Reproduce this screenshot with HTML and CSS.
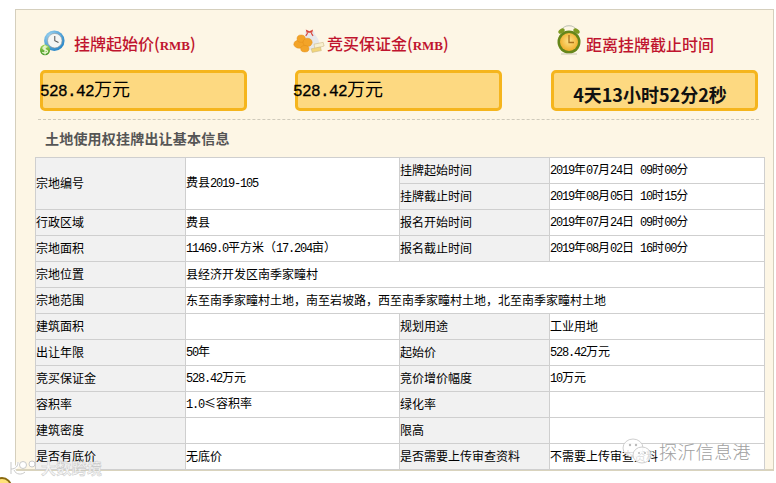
FILE: index.html
```html
<!DOCTYPE html>
<html lang="zh-CN">
<head>
<meta charset="utf-8">
<title>土地使用权挂牌出让基本信息</title>
<link rel="stylesheet" href="styles.css">
</head>
<body>
<div class="panel">
  <div class="stats">
    <section class="stat stat-a">
      <h3 class="stat-title">
        <svg class="ico" viewBox="0 0 28 28" width="26" height="26">
          <defs>
            <radialGradient id="blue" cx=".35" cy=".3" r=".8"><stop offset="0" stop-color="#a8dcf6"/><stop offset="1" stop-color="#1d7fc4"/></radialGradient>
            <linearGradient id="grn" x1="0" y1="0" x2="0" y2="1"><stop offset="0" stop-color="#a4d65a"/><stop offset="1" stop-color="#3d9424"/></linearGradient>
          </defs>
          <circle cx="16.500" cy="11.500" r="11" fill="url(#blue)"/>
          <circle cx="17" cy="11.500" r="7.800" fill="#f4f6f4" stroke="#8a8f92" stroke-width=".6"/>
          <path d="M17 6.500V11.500L21 13.500" fill="none" stroke="#555" stroke-width="1.100"/>
          <ellipse cx="6.500" cy="21.500" rx="5.500" ry="5.800" fill="url(#grn)"/>
          <path d="M9 18.500C7 17.300 4 18 4.300 19.800C4.600 21.500 9 21 9.200 23C9.300 25 5.600 25.300 3.600 24M6.500 16.500V26.500" fill="none" stroke="#eaf6cf" stroke-width="1.500"/>
        </svg>
        <span>挂牌起始价(<span class="n-t">RMB</span>)</span>
      </h3>
      <div class="value"><span class="n-v">528.42</span>万元</div>
    </section>
    <section class="stat stat-b">
      <h3 class="stat-title">
        <svg class="ico" viewBox="0 0 36 28" width="33" height="27">
          <path d="M14 4C16 7 13 10 13 16C13 22 17 25 23 25C29 25 31 20 29 14C28 10 24 8 24 4Z" fill="#e6e8ea"/>
          <path d="M15 2L19 4L23 2L22 5.500H16Z" fill="#d8453a"/>
          <path d="M17 6L15 9M21 6L23 9" stroke="#d8453a" stroke-width="1.200"/>
          <g fill="#f3a428" stroke="#e08a15" stroke-width=".5">
            <ellipse cx="8" cy="18" rx="6" ry="4.500"/>
            <ellipse cx="10" cy="12" rx="4.500" ry="4"/>
            <ellipse cx="17" cy="16" rx="5" ry="4.500"/>
            <ellipse cx="14" cy="23" rx="4.500" ry="3.500"/>
          </g>
          <path d="M24 18L34 16L35 20L25 23Z" fill="#f8f0cf" stroke="#c9b684" stroke-width=".6"/>
          <path d="M21 23L31 21L32 25L22 27Z" fill="#f2d67a" stroke="#c9b684" stroke-width=".6"/>
        </svg>
        <span>竞买保证金(<span class="n-t">RMB</span>)</span>
      </h3>
      <div class="value"><span class="n-v">528.42</span>万元</div>
    </section>
    <section class="stat stat-c">
      <h3 class="stat-title">
        <svg class="ico" viewBox="0 0 26 30" width="26" height="30">
          <defs>
            <radialGradient id="face" cx=".5" cy=".45" r=".6"><stop offset="0" stop-color="#fde38a"/><stop offset="1" stop-color="#f0a922"/></radialGradient>
          </defs>
          <path d="M5 6.500C6 2.500 10 .8 13 .8C16 .8 20 2.500 21 6.500" fill="none" stroke="#b9bdb0" stroke-width="1.100"/>
          <ellipse cx="5.500" cy="6" rx="3.500" ry="2.200" fill="#7f9a22" transform="rotate(-35 5.500 6)"/>
          <ellipse cx="20.500" cy="6" rx="3.500" ry="2.200" fill="#7f9a22" transform="rotate(35 20.500 6)"/>
          <circle cx="13" cy="17" r="11.500" fill="#66861a"/>
          <circle cx="13" cy="17" r="9" fill="url(#face)"/>
          <path d="M13 10V17.500H18" fill="none" stroke="#a8701a" stroke-width="1.300"/>
          <path d="M5 29H21" stroke="#c9c6b0" stroke-width="1"/>
        </svg>
        <span>距离挂牌截止时间</span>
      </h3>
      <div class="value value-count">4天13小时52分2秒</div>
    </section>
  </div>

  <h2 class="heading">土地使用权挂牌出让基本信息</h2>

  <table class="info">
    <colgroup>
      <col class="c1"><col class="c2"><col class="c3"><col class="c4">
    </colgroup>
    <tbody>
      <tr>
        <th rowspan="2">宗地编号</th>
        <td rowspan="2">费县<span class="n">2019-105</span></td>
        <th>挂牌起始时间</th>
        <td><span class="n">2019</span>年<span class="n">07</span>月<span class="n">24</span>日<span class="n"> 09</span>时<span class="n">00</span>分</td>
      </tr>
      <tr>
        <th>挂牌截止时间</th>
        <td><span class="n">2019</span>年<span class="n">08</span>月<span class="n">05</span>日<span class="n"> 10</span>时<span class="n">15</span>分</td>
      </tr>
      <tr>
        <th>行政区域</th><td>费县</td>
        <th>报名开始时间</th>
        <td><span class="n">2019</span>年<span class="n">07</span>月<span class="n">24</span>日<span class="n"> 09</span>时<span class="n">00</span>分</td>
      </tr>
      <tr>
        <th>宗地面积</th><td><span class="n">11469.0</span>平方米（<span class="n">17.204</span>亩）</td>
        <th>报名截止时间</th>
        <td><span class="n">2019</span>年<span class="n">08</span>月<span class="n">02</span>日<span class="n"> 16</span>时<span class="n">00</span>分</td>
      </tr>
      <tr><th>宗地位置</th><td colspan="3">县经济开发区南季家疃村</td></tr>
      <tr><th>宗地范围</th><td colspan="3">东至南季家疃村土地，南至岩坡路，西至南季家疃村土地，北至南季家疃村土地</td></tr>
      <tr><th>建筑面积</th><td></td><th>规划用途</th><td>工业用地</td></tr>
      <tr><th>出让年限</th><td><span class="n">50</span>年</td><th>起始价</th><td><span class="n">528.42</span>万元</td></tr>
      <tr><th>竞买保证金</th><td><span class="n">528.42</span>万元</td><th>竞价增价幅度</th><td><span class="n">10</span>万元</td></tr>
      <tr><th>容积率</th><td><span class="n">1.0</span>≤容积率</td><th>绿化率</th><td></td></tr>
      <tr><th>建筑密度</th><td></td><th>限高</th><td></td></tr>
      <tr><th>是否有底价</th><td>无底价</td><th>是否需要上传审查资料</th><td>不需要上传审查资料</td></tr>
    </tbody>
  </table>
</div>

<div class="mark mark-left">
  <svg viewBox="0 0 30 18" width="30" height="18" class="mark-ico">
    <path d="M2 3V15M2 10C7 10 9 7 9 3M5 11C7 16 13 16 16 13" fill="none" stroke="#fff" stroke-width="3"/>
    <path d="M2 3V15M2 10C7 10 9 7 9 3M5 11C7 16 13 16 16 13" fill="none" stroke="#c9c9c9" stroke-width="1"/>
    <circle cx="14" cy="6" r="3.500" fill="#fff" stroke="#c9c9c9"/><circle cx="23" cy="5" r="3" fill="#fff" stroke="#c9c9c9"/>
  </svg>
  <span>大数跨境</span>
</div>
<div class="mark mark-right">
  <svg viewBox="0 0 32 30" width="32" height="30" class="mark-ico">
    <ellipse cx="12" cy="12" rx="10" ry="9" fill="#fff" fill-opacity=".85" stroke="#cfcfcf"/>
    <ellipse cx="21" cy="19" rx="9" ry="8" fill="#fff" fill-opacity=".85" stroke="#cfcfcf"/>
    <circle cx="9" cy="9" r="1.200" fill="#bbb"/><circle cx="15" cy="9" r="1.200" fill="#bbb"/>
    <circle cx="18" cy="17" r="1" fill="#bbb"/><circle cx="24" cy="17" r="1" fill="#bbb"/>
  </svg>
  <span>探沂信息港</span>
</div>
<div class="smiley"></div>
</body>
</html>
```

FILE: styles.css
```css
* { box-sizing: border-box; }

html, body { margin: 0; height: 100%; }

body {
  position: relative;
  width: 776px;
  height: 483px;
  overflow: hidden;
  padding: 9px 2px 0 15px;
  background: #fff;
  font-family: "Noto Sans CJK SC", "Liberation Sans", sans-serif;
  color: #000;
}

.panel {
  height: 462px;
  padding: 0 9px 0 19px;
  background: #fdf6e5;
  border: 1px solid #d5cfbd;
  border-bottom: 2px solid #d9d3bd;
}

.stats {
  display: grid;
  grid-template-columns: 255px 256px 206px;
  height: 110px;
  margin: 0 5px 0 3px;
  padding-left: 2px;
  border-bottom: 1px dashed #cfcabb;
}

.stat { min-width: 0; }

.stat-title {
  display: flex;
  align-items: center;
  height: 60px;
  margin: 0;
  padding-top: 8px;
  font-size: 16px;
  line-height: 20px;
  font-weight: 500;
  color: #c0142e;
}

.ico { flex: none; }

.n-t {
  font-family: "Liberation Serif", serif;
  font-size: 13px;
  font-weight: 700;
}

.stat-a .stat-title { gap: 9px; margin-left: -1px; }
.stat-a .ico { margin-top: -3px; }
.stat-b .stat-title { gap: 2px; margin-left: -3px; }
.stat-b .ico { margin-top: -7px; }
.stat-c .stat-title { gap: 4px; padding-left: 5px; }
.stat-c .ico { margin-top: -8px; }

.value {
  width: 207px;
  height: 41px;
  border: 3px solid #f5b51d;
  border-radius: 5px;
  background: #fdd981;
  font-size: 18px;
  line-height: 31px;
  white-space: nowrap;
}

.stat-a .value { text-indent: -3px; }
.stat-b .value { text-indent: -5px; }

.n-v {
  font-family: "Liberation Mono", monospace;
  font-size: 16px;
  letter-spacing: -.6px;
  -webkit-text-stroke: .3px #000;
}

.value-count {
  padding-top: 8px;
  font-size: 18px;
  font-weight: 700;
  line-height: 26px;
  text-align: center;
  text-indent: -9px;
  color: #111;
}

.heading {
  height: 37px;
  margin: 0;
  padding: 8px 0 0 10px;
  font-size: 14px;
  line-height: 20px;
  letter-spacing: .2px;
  font-weight: 700;
  color: #555;
}

.info {
  width: 729px;
  table-layout: fixed;
  border-collapse: collapse;
  background: #fff;
  font-size: 12px;
}

.c1 { width: 150px; }
.c2 { width: 214px; }
.c3 { width: 150px; }
.c4 { width: 215px; }

.info tr { height: 26px; }

.info th, .info td {
  padding: 0 0 2px 0;
  border: 1px solid #cfcfcf;
  font-weight: 400;
  text-align: left;
  line-height: 16px;
  white-space: nowrap;
  overflow: hidden;
  color: #000;
}

.info th { background: #f1f1f1; }

.n {
  font-family: "Liberation Mono", monospace;
  font-size: 12px;
  letter-spacing: -1.2px;
  white-space: pre;
}

.mark {
  position: absolute;
  display: flex;
  align-items: center;
}

.mark-ico { flex: none; }

.mark-left {
  left: 9px;
  top: 458px;
  gap: 2px;
  font-size: 15px;
  line-height: 20px;
  color: #f4f4f4;
  -webkit-text-stroke: .4px #c4c4c4;
  letter-spacing: .3px;
  font-weight: 700;
}

.mark-right {
  left: 621px;
  top: 436px;
  font-size: 18px;
  line-height: 26px;
  letter-spacing: .4px;
  font-weight: 300;
  color: #a0a0a0;
}

.mark-right .mark-ico { margin-right: 6px; }

.smiley {
  position: absolute;
  left: -8px;
  top: 477px;
  width: 20px;
  height: 20px;
  border: 2px solid #8a6a10;
  border-radius: 50%;
  background: #ffe27a;
}
```
